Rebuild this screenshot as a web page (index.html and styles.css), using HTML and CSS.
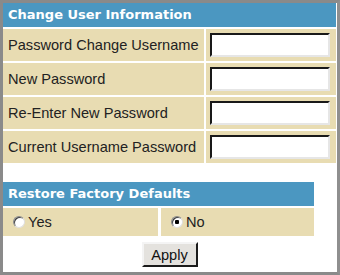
FILE: index.html
```html
<!DOCTYPE html>
<html lang="en">
<head>
  <meta charset="UTF-8" />
  <title>User Information</title>
  <link rel="stylesheet" href="styles.css">
</head>
<body>
  <div class="frame">
    <div class="title">Change User Information</div>
    <div class="fields">
      <div class="label">Password Change Username</div>
      <div class="value"><input type="text" class="box" /></div>
      <div class="label">New Password</div>
      <div class="value"><input type="password" class="box" /></div>
      <div class="label">Re-Enter New Password</div>
      <div class="value"><input type="password" class="box" /></div>
      <div class="label">Current Username Password</div>
      <div class="value"><input type="password" class="box" /></div>
    </div>

    <div class="restore">
      <div class="title">Restore Factory Defaults</div>
      <div class="choices">
        <label class="choice"><input type="radio" name="restore" value="yes" />Yes</label>
        <label class="choice"><input type="radio" name="restore" value="no" checked />No</label>
      </div>
    </div>

    <div class="actions">
      <button type="button" class="apply">Apply</button>
    </div>
  </div>
</body>
</html>
```

FILE: styles.css
```css
body { margin: 0; background: #fff; font-family: "Liberation Sans", Arial, sans-serif; font-size: 14.6px; color: #222; }
.frame {
  width: 340px; height: 275px; box-sizing: border-box;
  border: 3px solid #8a8a8a; border-right-color: #8f8f8f;
  padding-right: 1px;
}
.title {
  background: #4b97c1; color: #fff; height: 24px; line-height: 24px;
  padding-left: 5px; font-family: "DejaVu Sans", Verdana, sans-serif;
  font-weight: bold; font-size: 13px;
}
.fields {
  display: grid; grid-template-columns: 201px 1fr; gap: 2px;
  margin-top: 2px;
}
.label, .value { background: #e8dcb2; height: 32px; display: flex; align-items: center; }
.label { padding-left: 5px; }
.value { padding-left: 4px; }
.box {
  width: 120px; height: 24px; box-sizing: border-box; margin: 0;
  border: 2px inset #d0d0d0; border-top-color: #6e6e6e; border-left-color: #6e6e6e;
  border-bottom-color: #e6e6e6; border-right-color: #e6e6e6; background: #fff;
}
.restore { width: 311px; margin-top: 19px; }
.choices { display: grid; grid-template-columns: 155px 1fr; gap: 3px; margin-top: 2px; }
.choice { background: #e8dcb2; height: 28px; display: flex; align-items: center; padding-left: 10px; }
.choice input {
  appearance: none; -webkit-appearance: none; margin: 0 3px 0 0;
  width: 12px; height: 12px; border-radius: 50%; box-sizing: border-box;
  border: 1px solid #8a8a8a; border-bottom-color: #e0e0e0; border-right-color: #e0e0e0;
  background: #fff; box-shadow: inset 1px 1px 0 #404040;
}
.choice input:checked { background: radial-gradient(circle, #000 0 2px, #fff 2.5px); }
.actions { display: flex; justify-content: center; margin-top: 6px; }
.apply {
  font-family: "Liberation Sans", Arial, sans-serif; font-size: 14.6px;
  width: 56px; height: 25px; padding: 0; background: #e4e2de; color: #111;
  border: 2px outset #f4f4f4; border-right-color: #707070; border-bottom-color: #707070;
}
```
